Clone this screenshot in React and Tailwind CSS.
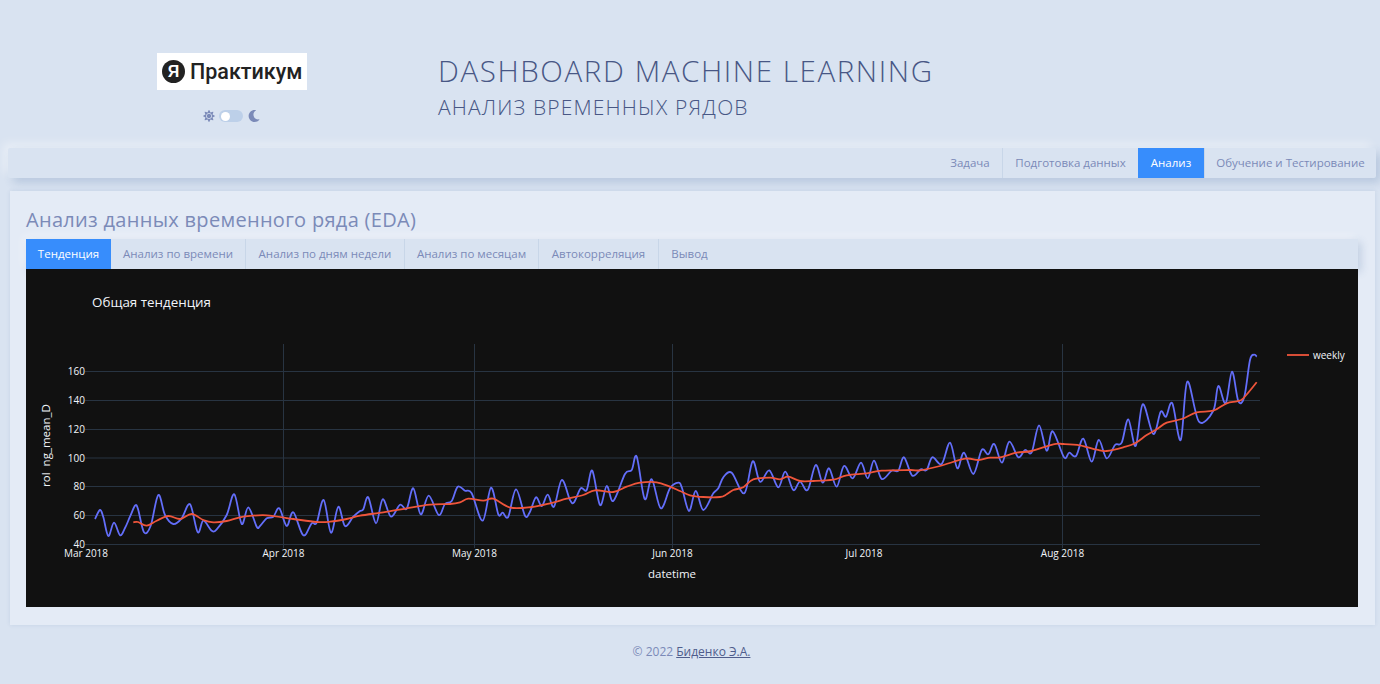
import { FaSun, FaMoon } from 'react-icons/fa';

const NAV = [
  { label: 'Задача', cls: 'w-[65px] border-r border-[#c8d6e8]' },
  { label: 'Подготовка данных', cls: 'w-[135px]' },
  { label: 'Анализ', cls: 'w-[66px] bg-[#378dfc] text-white' },
  { label: 'Обучение и Тестирование', cls: 'w-[172px] border-l border-[#c8d6e8]' },
];

const TABS = [
  { label: 'Тенденция', cls: 'w-[85px] bg-[#378dfc] text-white' },
  { label: 'Анализ по времени', cls: 'w-[135px] border-r border-[#c8d6e8]' },
  { label: 'Анализ по дням недели', cls: 'w-[159px] border-r border-[#c8d6e8]' },
  { label: 'Анализ по месяцам', cls: 'w-[134px] border-r border-[#c8d6e8]' },
  { label: 'Автокорреляция', cls: 'w-[120px] border-r border-[#c8d6e8]' },
  { label: 'Вывод', cls: 'w-[61px]' },
];

// traced from the picture, coordinates are px inside the chart block
const BLUE = [[95,519],[100,510],[103.3,517],[108.3,536],[114,522.7],[120,535.3],[125,528],[130,516.7],[135,505.7],[138,509],[144,532.3],[150.7,525.7],[158.3,495],[165,515],[173.3,524],[181.7,518.3],[190,504.3],[197.7,532.3],[203.3,520.7],[211.7,530.7],[216.7,529.3],[226.7,515],[234.3,494.3],[241.7,524],[248.3,507.3],[256.7,526.7],[260,526],[266.7,518.3],[273.3,516.7],[279.3,508.3],[286.7,526],[293.3,512.3],[303.3,535.3],[311.7,523.3],[316.7,522.7],[323.7,500],[331,532.7],[338.3,506.7],[345,526],[353.3,516.7],[360,511],[363.3,509.3],[368.3,497.3],[376,523.3],[382.7,499.3],[391,516.7],[400,504.7],[406.7,508.7],[413.3,488.3],[420.7,514.3],[428.7,495.7],[438.7,515],[445,504],[451.7,501],[457.7,486.7],[465,490.7],[471.7,493.3],[482.7,520.7],[491,487.7],[498.3,514.3],[502.7,512.7],[508.3,516.7],[516,489.3],[525,515.7],[530,511.7],[536,497.3],[541.7,506],[547.7,494.7],[554,506.7],[561.7,480],[570,500],[574,502.3],[580.7,488.3],[586.7,490],[592.3,470.7],[600,505],[606.7,486],[613.3,501],[625,474],[631.7,470],[636.7,456.7],[644.7,499],[651.7,479.3],[660.7,508.3],[670,488.3],[678.3,482.7],[682,488],[689,511],[695.7,491],[703.3,510],[713.3,493.3],[718.3,488.3],[723.3,477.3],[731.7,472.7],[744.3,493.3],[752.7,461.3],[760,481.7],[769.3,470.3],[778.3,487.3],[785.3,471.7],[793.3,490],[800,481.7],[807.7,490],[815.7,465],[822.7,482.7],[829,468.3],[836.7,486.7],[844,466],[852.7,478.3],[861,462.7],[867.7,478.3],[874,460.7],[881.7,479],[891.7,470.7],[898.3,470.7],[904,457.3],[912.3,475.7],[920.7,469.3],[926.7,470],[932.3,457.3],[941.7,464],[950,442.7],[957.3,468.3],[964,452.7],[973.3,474],[981.7,450],[988.3,454.3],[994.3,444],[1002,462.7],[1009.3,441.7],[1018.3,457.3],[1025,450],[1031.7,452.3],[1039,425.3],[1046.7,450.7],[1052.7,431.3],[1064,457.3],[1069.3,452.7],[1076,456],[1083.3,438.7],[1091.7,461.7],[1098.7,440],[1106.7,458.3],[1115,445],[1121.7,442.7],[1128.3,419.3],[1135.7,446],[1142.7,404.3],[1153.3,434],[1160.7,411.7],[1166,416.7],[1172.3,403.3],[1180.7,440],[1187.3,381.7],[1199,421.7],[1213.3,410.7],[1218.3,386],[1225.7,403.3],[1232,371.7],[1238.3,401],[1244.3,396.7],[1250,360],[1254.3,354.7],[1256.7,356.7]];

const RED = [[133.3,522.3],[138,522],[146.7,525.7],[156.7,520.7],[168.3,516],[180,519],[191.7,514],[203.3,520],[213.3,522.3],[226.7,521],[243.3,516.7],[266.7,515.3],[293.3,519],[316.7,522],[330,521.7],[346.7,519],[360,515.7],[383.3,512.3],[406.7,508.3],[430,504.7],[450,504],[460,502.3],[468.3,498.7],[483.3,500.7],[493.3,498.7],[510.7,507.7],[531.7,507],[550,503.3],[566.7,498.7],[583.3,495],[595,490.3],[613.3,492],[626.7,486.7],[640,482.7],[656.7,482.3],[670,486.7],[680,491],[690,495.3],[703.3,497],[720,497],[726.7,494.3],[733.3,490],[743.3,487.3],[753.3,479.3],[770,477.7],[780,479.3],[788.3,476.7],[800,481],[813.3,481],[833.3,479.7],[846.7,475.3],[866.7,473.3],[881.7,470.7],[910,470],[920,470.3],[940,466],[965,458.7],[978.3,460],[990,457.7],[1000,457.3],[1016.7,452.7],[1031.7,451],[1053.3,444.3],[1063.3,444],[1080,445.3],[1096.7,449.7],[1106.7,451],[1123.3,447.3],[1135,443.3],[1146.7,435],[1156.7,429.3],[1166.7,422.7],[1181.7,419],[1196.7,412.3],[1213.3,410.7],[1226.7,403.3],[1236.7,401.3],[1243.3,398.3],[1256.7,382.3]];

const Y_TICKS = [[160, 371.5], [140, 400.5], [120, 429.5], [100, 458], [80, 486.5], [60, 515.5], [40, 544.5]];
const X_TICKS = [['Mar 2018', 86, false], ['Apr 2018', 283.5, true], ['May 2018', 474.5, true], ['Jun 2018', 672.5, true], ['Jul 2018', 864, false], ['Aug 2018', 1062.5, true]];

function smooth(pts, ox, oy) {
  const p = pts.map(([x, y]) => [x - ox, y - oy]);
  let d = `M${p[0][0]},${p[0][1]}`;
  for (let i = 0; i < p.length - 1; i++) {
    const a = p[i - 1] || p[i];
    const b = p[i];
    const c = p[i + 1];
    const e = p[i + 2] || c;
    const c1 = [b[0] + (c[0] - a[0]) / 6, b[1] + (c[1] - a[1]) / 6];
    const c2 = [c[0] - (e[0] - b[0]) / 6, c[1] - (e[1] - b[1]) / 6];
    d += `C${c1[0].toFixed(1)},${c1[1].toFixed(1)} ${c2[0].toFixed(1)},${c2[1].toFixed(1)} ${c[0].toFixed(1)},${c[1].toFixed(1)}`;
  }
  return d;
}

function Chart() {
  // svg origin is the chart's top-left corner on the page
  const ox = 26;
  const oy = 269;
  return (
    <svg width="1332" height="338" className="block bg-[#111111]" style={{ fontFamily: '"Open Sans", sans-serif' }}>
      <text x={92 - ox} y={307 - oy} fontSize="13.4" fill="#f2f5fa">Общая тенденция</text>
      {Y_TICKS.map(([v, y]) => (
        <g key={v}>
          <line x1={85 - ox} x2={1260 - ox} y1={y - oy} y2={y - oy} stroke="#283442" strokeWidth="1" />
          <text x={85 - ox} y={y - oy + 3.5} fontSize="10" fill="#f2f5fa" textAnchor="end">{v}</text>
        </g>
      ))}
      {X_TICKS.map(([t, x, grid]) => (
        <g key={t}>
          {grid && <line x1={x - ox} x2={x - ox} y1={344 - oy} y2={548 - oy} stroke="#283442" strokeWidth="1" />}
          <text x={x - ox} y={557 - oy} fontSize="10" fill="#f2f5fa" textAnchor="middle">{t}</text>
        </g>
      ))}
      <text x={672 - ox} y={578 - oy} fontSize="11.5" fill="#f2f5fa" textAnchor="middle">datetime</text>
      <text transform={`translate(${50 - ox},${445.5 - oy}) rotate(-90)`} fontSize="11.5" fill="#f2f5fa" textAnchor="middle" className="whitespace-pre">rol  ng_mean_D</text>
      <path d={smooth(BLUE, ox, oy)} fill="none" stroke="#636efa" strokeWidth="1.8" />
      <path d={smooth(RED, ox, oy)} fill="none" stroke="#ef553b" strokeWidth="1.8" />
      <line x1={1287 - ox} x2={1309 - ox} y1={355 - oy} y2={355 - oy} stroke="#ef553b" strokeWidth="1.8" />
      <text x={1313 - ox} y={359 - oy} fontSize="10" fill="#f2f5fa">weekly</text>
    </svg>
  );
}

export default function App() {
  return (
    <div className="min-h-screen bg-[#d9e3f1] text-[#7b8ab8] font-['Open_Sans',sans-serif] overflow-hidden">
      <header className="h-[148px] flex">
        <div className="w-[438px] pl-[26px] pt-[53px] flex flex-col items-center">
          <div className="w-[150px] h-[37px] bg-white flex items-center pl-[5px] gap-[5px]">
            <span className="w-[23px] h-[23px] rounded-full bg-[#222222] text-white flex items-center justify-center text-[16px] font-bold leading-none font-['Liberation_Sans',sans-serif]">Я</span>
            <span className="text-[#222222] text-[21.5px] font-medium leading-none font-['Roboto',sans-serif]">Практикум</span>
          </div>
          <div className="mt-[20px] flex items-center -translate-x-[1px]">
            <FaSun className="text-[12px] text-[#7b8ab8]" />
            <span className="ml-[4px] mr-[5px] w-[24px] h-[12px] rounded-full bg-[#bdd0e9] flex items-center pl-[2px]">
              <span className="w-[9px] h-[9px] rounded-full bg-white" />
            </span>
            <FaMoon className="text-[12px] text-[#7b8ab8]" />
          </div>
        </div>
        <div className="pt-[52px]">
          <h1 className="text-[29.5px] leading-[38px] tracking-[1.6px] text-[#485785] font-light">DASHBOARD MACHINE LEARNING</h1>
          <h2 className="mt-[2px] text-[21px] leading-[30px] tracking-[1.15px] text-[#485785] font-light">АНАЛИЗ ВРЕМЕННЫХ РЯДОВ</h2>
        </div>
      </header>

      <nav className="ml-[8px] mr-[4px] h-[30px] bg-[#d9e3f1] flex justify-end shadow-[5px_5px_10px_rgba(55,94,148,0.2),-5px_-5px_10px_rgba(255,255,255,0.4)] rounded-[2px]">
        {NAV.map((n) => (
          <div key={n.label} className={`${n.cls} flex items-center justify-center text-[11.5px]`}>{n.label}</div>
        ))}
      </nav>

      <main className="mt-[13px] ml-[10px] mr-[5px] h-[434px] bg-[#e4ebf6] pl-[16px] pr-[17px] pt-[15px] shadow-[0_0_4px_rgba(55,94,148,0.12)]">
        <h3 className="h-[33px] text-[20px] leading-[28px] font-normal tracking-[0.3px]">Анализ данных временного ряда (EDA)</h3>
        <div className="h-[30px] bg-[#d9e3f1] flex shadow-[3px_3px_8px_rgba(55,94,148,0.2),-3px_-3px_8px_rgba(255,255,255,0.4)]">
          {TABS.map((t) => (
            <div key={t.label} className={`${t.cls} flex items-center justify-center text-[11.5px]`}>{t.label}</div>
          ))}
        </div>
        <Chart />
      </main>

      <footer className="mt-[18px] pl-[3px] text-center text-[12px] leading-[18px]">
        © 2022 <a href="#" className="underline text-[#4f5d8c]">Биденко Э.А.</a>
      </footer>
    </div>
  );
}
